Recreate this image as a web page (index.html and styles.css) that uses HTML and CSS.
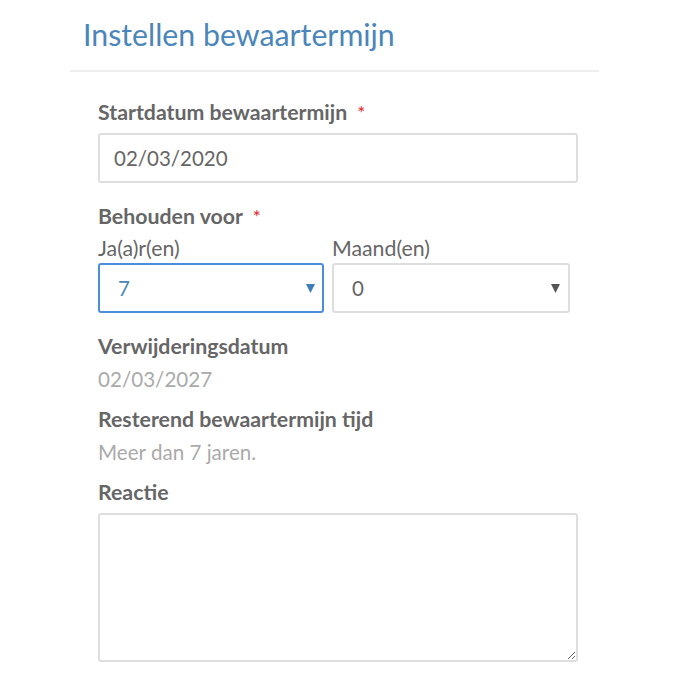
FILE: index.html
```html
<!DOCTYPE html>
<html>
<head>
<meta charset="utf-8">
<link rel="stylesheet" href="styles.css">
</head>
<body>
<div class="panel">
  <h1 class="title">Instellen bewaartermijn</h1>
  <div class="form">
    <div class="group boxed">
      <label class="label">Startdatum bewaartermijn <span class="req">*</span></label>
      <div class="input">02/03/2020</div>
    </div>
    <div class="group boxed">
      <label class="label">Behouden voor <span class="req">*</span></label>
      <div class="split">
        <div class="col">
          <div class="sublabel">Ja(a)r(en)</div>
          <div class="select focus"><span>7</span>
            <svg class="arrow" width="9" height="9" viewBox="0 0 9 9"><path d="M0 0H9L4.5 9Z"/></svg>
          </div>
        </div>
        <div class="col">
          <div class="sublabel">Maand(en)</div>
          <div class="select"><span>0</span>
            <svg class="arrow" width="9" height="9" viewBox="0 0 9 9"><path d="M0 0H9L4.5 9Z"/></svg>
          </div>
        </div>
      </div>
    </div>
    <div class="group">
      <div class="label">Verwijderingsdatum</div>
      <div class="value">02/03/2027</div>
    </div>
    <div class="group">
      <div class="label">Resterend bewaartermijn tijd</div>
      <div class="value">Meer dan 7 jaren.</div>
    </div>
    <div class="group">
      <div class="label">Reactie</div>
      <textarea class="textarea"></textarea>
    </div>
  </div>
</div>
</body>
</html>
```
FILE: styles.css
```css
* { box-sizing: border-box; }
html, body { margin: 0; padding: 0; background: #fff; }
body { font-family: Lato, "Open Sans", sans-serif; color: #666; }
.panel { margin-left: 70px; width: 529px; }
.title {
  margin: 0;
  padding: 12px 0 0 13px;
  height: 72px;
  font-size: 30.3px;
  font-weight: 400;
  color: #4a86b9;
  line-height: 44px;
  border-bottom: 2px solid #eeeeee;
}
.form { padding: 26px 0 0 28px; width: 508px; }
.group { margin-bottom: 10px; }
.group.boxed { margin-bottom: 19px; }
.label { display: block; font-weight: 700; font-size: 21.3px; line-height: 28px; color: #666; }
.req { color: #e8262a; margin-left: 5px; font-weight: 400; font-size: 19px; }
.input {
  margin-top: 6px;
  width: 480px; height: 50px;
  border: 2px solid #dedede; border-radius: 3px;
  padding: 0 14px;
  font-size: 20.5px; line-height: 46px; color: #666;
}
.split { display: flex; gap: 8px; }
.col:first-child { width: 226px; }
.col:last-child { width: 238px; }
.sublabel { margin-top: 3px; font-size: 21.3px; line-height: 29px; color: #666; }
.select {
  position: relative;
  height: 50px;
  border: 2px solid #dedede; border-radius: 3px;
  padding: 0 18px;
  font-size: 20.5px; line-height: 46px; color: #666;
}
.select.focus { border-color: #4a8fde; color: #4a86b9; }
.arrow { position: absolute; right: 8px; top: 19px; fill: #555; }
.select.focus .arrow { right: 7px; fill: #3d7db8; }
.value { margin-top: 3px; font-size: 20.6px; line-height: 32px; color: #aaa; }
.textarea {
  display: block;
  margin-top: 7px;
  width: 480px; height: 149px;
  border: 2px solid #dedede; border-radius: 3px;
  resize: vertical;
  font-family: inherit;
}
```
